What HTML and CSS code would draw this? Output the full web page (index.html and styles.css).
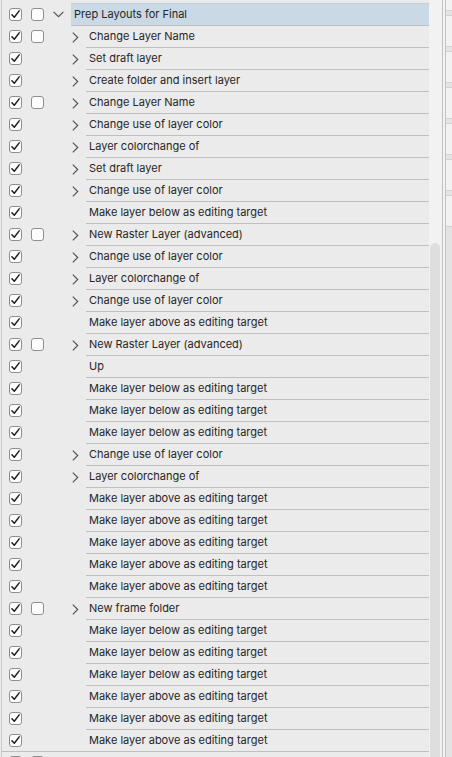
FILE: index.html
```html
<!DOCTYPE html>
<html>
<head>
<meta charset="utf-8">
<link rel="stylesheet" href="styles.css">
</head>
<body>
<div class="app">
  <div class="list" id="list"></div>
  <div class="scroll"><div class="thumb"></div></div>
  <div class="divider"></div>
  <div class="panel">
    <div class="band"></div><div class="cell"></div>
    <div class="band"></div><div class="cell"></div>
    <div class="band"></div><div class="cell"></div>
    <div class="band"></div><div class="cell"></div>
    <div class="band"></div><div class="cell"></div>
    <div class="band"></div><div class="cell"></div>
    <div class="rest"></div>
  </div>
</div>
<script src="script.js"></script>
</body>
</html>
```
FILE: styles.css
```css
html, body {
  margin: 0;
  padding: 0;
  background: #ebebeb;
  overflow: hidden;
  height: 757px;
}
.app {
  display: flex;
  height: 757px;
  font-family: Inter, "Liberation Sans", sans-serif;
  font-size: 11px;
  color: #262626;
}
.list {
  width: 427px;
  margin-left: 1px;
  border-left: 1px solid #c9c9c9;
  padding-top: 4px;
  display: flex;
  flex-direction: column;
  overflow: hidden;
  flex: none;
}
.row {
  display: flex;
  height: 22px;
  flex: none;
  align-items: stretch;
}
.row.last {
  border-bottom: 1px solid #bfbfbf;
  height: 21px;
}
.cb {
  width: 11px;
  height: 11px;
  border: 1px solid #8f8f8f;
  border-radius: 3px;
  background: #fdfdfd;
  margin-top: 4px;
  flex: none;
  box-sizing: content-box;
  display: flex;
}
.sel .cb { margin-top: 5px; }
.cb svg { display: block; }
.cb1 { margin-left: 7px; }
.cb2 { margin-left: 9px; }
.nocb { width: 13px; margin-left: 9px; flex: none; }
.chev {
  flex: none;
  display: flex;
  align-items: center;
}
.l1 .chev { width: 27px; padding-left: 9px; box-sizing: border-box; }
.l2 .chev { width: 42px; padding-left: 28px; box-sizing: border-box; }
.tail .chev { align-items: flex-start; padding-top: 9px; }
.chev svg { display: block; }
.label {
  flex: 1;
  border-bottom: 1px solid #bfbfbf;
  padding-left: 3px;
  line-height: 21px;
  white-space: nowrap;
}
.last .label { border-bottom: none; }
.row.sel .label {
  background: #c9d9e6;
  border-top: 1px solid #c4cfd8;
  line-height: 21px;
}
.row.sel { margin-top: -1px; height: 23px; }
.scroll {
  width: 13px;
  flex: none;
  background: #f2f2f2;
  position: relative;
}
.thumb {
  position: absolute;
  left: 1px;
  width: 10px;
  top: 243px;
  bottom: 0;
  background: #dedede;
  border-radius: 5px 5px 0 0;
}
.divider {
  width: 2px;
  flex: none;
  border-left: 1px solid #c4c4c4;
  border-right: 1px solid #c4c4c4;
  background: #f2f2f2;
}
.panel {
  flex: 1;
  background: #f2f2f2;
  padding-top: 10px;
  display: flex;
  flex-direction: column;
}
.band {
  height: 4px;
  border-top: 1px solid #d3d3d3;
  border-bottom: 1px solid #d3d3d3;
  background: #e4e4e4;
  flex: none;
}
.cell { height: 30px; flex: none; }
.rest {
  flex: 1;
  background: #e3e3e3;
  border-top: 1px solid #d0d0d0;
}
```
FILE: script.js
```js
var rows = [
  [1, 1, 'd', 1, 'Prep Layouts for Final', 'sel'],
  [1, 1, 'r', 2, 'Change Layer Name'],
  [1, 0, 'r', 2, 'Set draft layer'],
  [1, 0, 'r', 2, 'Create folder and insert layer'],
  [1, 1, 'r', 2, 'Change Layer Name'],
  [1, 0, 'r', 2, 'Change use of layer color'],
  [1, 0, 'r', 2, 'Layer colorchange of'],
  [1, 0, 'r', 2, 'Set draft layer'],
  [1, 0, 'r', 2, 'Change use of layer color'],
  [1, 0, '', 2, 'Make layer below as editing target'],
  [1, 1, 'r', 2, 'New Raster Layer (advanced)'],
  [1, 0, 'r', 2, 'Change use of layer color'],
  [1, 0, 'r', 2, 'Layer colorchange of'],
  [1, 0, 'r', 2, 'Change use of layer color'],
  [1, 0, '', 2, 'Make layer above as editing target'],
  [1, 1, 'r', 2, 'New Raster Layer (advanced)'],
  [1, 0, '', 2, 'Up'],
  [1, 0, '', 2, 'Make layer below as editing target'],
  [1, 0, '', 2, 'Make layer below as editing target'],
  [1, 0, '', 2, 'Make layer below as editing target'],
  [1, 0, 'r', 2, 'Change use of layer color'],
  [1, 0, 'r', 2, 'Layer colorchange of'],
  [1, 0, '', 2, 'Make layer above as editing target'],
  [1, 0, '', 2, 'Make layer above as editing target'],
  [1, 0, '', 2, 'Make layer above as editing target'],
  [1, 0, '', 2, 'Make layer above as editing target'],
  [1, 0, '', 2, 'Make layer above as editing target'],
  [1, 1, 'r', 2, 'New frame folder'],
  [1, 0, '', 2, 'Make layer below as editing target'],
  [1, 0, '', 2, 'Make layer below as editing target'],
  [1, 0, '', 2, 'Make layer below as editing target'],
  [1, 0, '', 2, 'Make layer above as editing target'],
  [1, 0, '', 2, 'Make layer above as editing target'],
  [1, 0, '', 2, 'Make layer above as editing target', 'last'],
  [0, 1, 'd', 1, '', 'tail']
];
var CHECK = '<svg width="11" height="11" viewBox="0 0 11 11"><polyline points="1.9,5.7 4.3,8.2 9.2,1.9" fill="none" stroke="#1f1f1f" stroke-width="1.5" stroke-linecap="round" stroke-linejoin="round"/></svg>';
var DOWN = '<svg width="11" height="7" viewBox="0 0 11 7"><polyline points="0.6,0.8 5.5,5.7 10.4,0.8" fill="none" stroke="#555" stroke-width="1.2"/></svg>';
var RIGHT = '<svg width="7" height="11" viewBox="0 0 7 11"><polyline points="0.8,0.6 5.7,5.5 0.8,10.4" fill="none" stroke="#555" stroke-width="1.2"/></svg>';
var list = document.getElementById('list');
var html = '';
rows.forEach(function (r) {
  var cls = 'row l' + r[3] + (r[5] ? ' ' + r[5] : '');
  html += '<div class="' + cls + '">';
  html += '<span class="cb cb1">' + (r[0] ? CHECK : '') + '</span>';
  html += r[1] ? '<span class="cb cb2"></span>' : '<span class="nocb"></span>';
  html += '<span class="chev">' + (r[2] === 'd' ? DOWN : r[2] === 'r' ? RIGHT : '') + '</span>';
  html += '<span class="label">' + r[4] + '</span>';
  html += '</div>';
});
list.innerHTML = html;
```
